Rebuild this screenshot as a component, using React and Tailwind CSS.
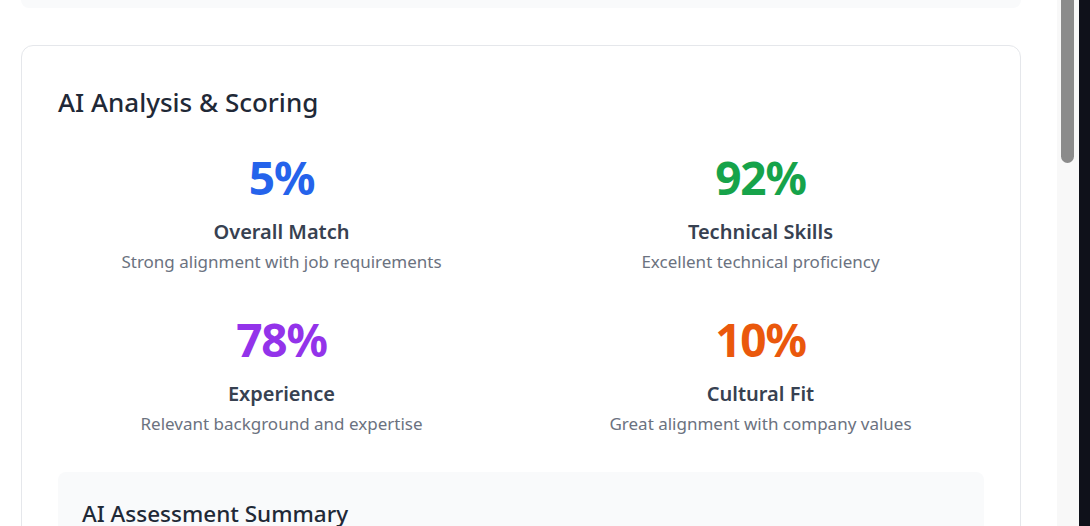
import React from "react";

const metrics = [
  { value: "5%", color: "text-[#2563eb]", label: "Overall Match", desc: "Strong alignment with job requirements" },
  { value: "92%", color: "text-[#16a34a]", label: "Technical Skills", desc: "Excellent technical proficiency" },
  { value: "78%", color: "text-[#9333ea]", label: "Experience", desc: "Relevant background and expertise" },
  { value: "10%", color: "text-[#ea580c]", label: "Cultural Fit", desc: "Great alignment with company values" },
];

export default function App() {
  return (
    <div
      className="flex h-[526px] w-[1090px] overflow-hidden bg-white"
      style={{ fontFamily: '"Noto Sans", "Open Sans", sans-serif' }}
    >
      <div className="h-full w-[1057px] shrink-0 overflow-hidden">
        <div className="ml-[21px] w-[1000px]">
          <div className="h-[8px] rounded-b-xl bg-[#f9fafb]" />
          <div className="mt-[37px] rounded-xl border border-[#e5e7eb] bg-white p-9">
            <h2 className="mt-[4px] text-[26px] leading-8 font-medium text-[#1f2937]">AI Analysis &amp; Scoring</h2>
            <div className="mt-[36px] grid grid-cols-2 gap-x-8 gap-y-[42px]">
              {metrics.map((m) => (
                <div key={m.label} className="flex flex-col items-center text-center">
                  <div className={`text-[46px] leading-none font-bold tracking-tight ${m.color}`}>{m.value}</div>
                  <div className="mt-[18px] text-xl leading-7 font-semibold text-[#374151]">{m.label}</div>
                  <div className="mt-[4px] text-[17px] leading-6 text-[#6b7280]">{m.desc}</div>
                </div>
              ))}
            </div>
            <div className="mt-[36px] h-[120px] rounded-lg bg-[#f9fafb] px-6 pt-7 pb-6">
              <h3 className="text-[22.5px] leading-7 font-medium text-[#1f2937]">AI Assessment Summary</h3>
            </div>
          </div>
        </div>
      </div>
      <div className="h-full w-[22px] shrink-0 bg-[#f8f8f8] pl-[4px]">
        <div className="h-[163px] w-[13px] rounded-b-full bg-[#8b8b8b]" />
      </div>
      <div className="h-full w-[11px] shrink-0 bg-[#0f111a]" />
    </div>
  );
}
